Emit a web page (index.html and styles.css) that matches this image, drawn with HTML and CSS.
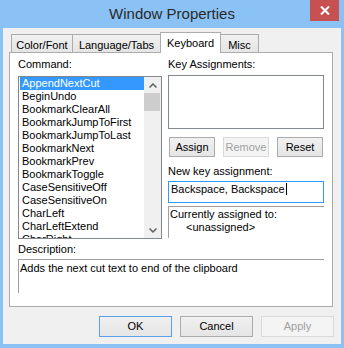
FILE: index.html
```html
<!DOCTYPE html>
<html>
<head>
  <title>Window Properties</title>
  <link rel="stylesheet" href="styles.css">
</head>
<body>
  <div class="window">
    <div class="titlebar">
      <span></span>
      <span class="title">Window Properties</span>
      <span class="close">
        <svg width="10" height="9" viewBox="0 0 10 9"><path d="M1 0.5 L9 8.5 M9 0.5 L1 8.5" stroke="#fff" stroke-width="2"/></svg>
      </span>
    </div>

    <div class="client">
      <div class="tabs">
        <div class="tab w-color">Color/Font</div>
        <div class="tab w-lang">Language/Tabs</div>
        <div class="tab w-key active">Keyboard</div>
        <div class="tab w-misc">Misc</div>
      </div>

      <div class="panel">
        <div class="cols">
          <div class="col-left">
            <div class="label">Command:</div>
            <div class="listbox">
              <div class="items">
                <div class="item selected">AppendNextCut</div>
                <div class="item">BeginUndo</div>
                <div class="item">BookmarkClearAll</div>
                <div class="item">BookmarkJumpToFirst</div>
                <div class="item">BookmarkJumpToLast</div>
                <div class="item">BookmarkNext</div>
                <div class="item">BookmarkPrev</div>
                <div class="item">BookmarkToggle</div>
                <div class="item">CaseSensitiveOff</div>
                <div class="item">CaseSensitiveOn</div>
                <div class="item">CharLeft</div>
                <div class="item">CharLeftExtend</div>
                <div class="item partial">CharRight</div>
              </div>
              <div class="scrollbar">
                <div class="arrow">
                  <svg width="8" height="5" viewBox="0 0 8 5"><path d="M0.5 4.5 L4 1 L7.5 4.5" fill="none" stroke="#606060" stroke-width="1.5"/></svg>
                </div>
                <div class="thumb"></div>
                <div class="track"></div>
                <div class="arrow">
                  <svg width="8" height="5" viewBox="0 0 8 5"><path d="M0.5 0.5 L4 4 L7.5 0.5" fill="none" stroke="#606060" stroke-width="1.5"/></svg>
                </div>
              </div>
            </div>
          </div>

          <div class="col-right">
            <div class="label">Key Assignments:</div>
            <div class="keybox"></div>
            <div class="btn-row">
              <div class="btn small">Assign</div>
              <div class="btn small disabled">Remove</div>
              <div class="btn small">Reset</div>
            </div>
            <div class="label new-key">New key assignment:</div>
            <div class="input">Backspace, Backspace<span class="caret"></span></div>
            <div class="group">
              <div>Currently assigned to:</div>
              <div class="indent">&lt;unassigned&gt;</div>
            </div>
          </div>
        </div>

        <div class="label desc-label">Description:</div>
        <div class="desc">Adds the next cut text to end of the clipboard</div>
      </div>

      <div class="footer">
        <div class="btn wide default">OK</div>
        <div class="btn wide">Cancel</div>
        <div class="btn wide disabled">Apply</div>
      </div>
    </div>
  </div>
</body>
</html>
```

FILE: styles.css
```css
body {
  margin: 0;
  font-family: "Liberation Sans", Arial, sans-serif;
  font-size: 11px;
  color: #000;
}

.window {
  width: 344px;
  height: 348px;
  box-sizing: border-box;
  padding: 0 3px 4px;
  background: #8ac2f5;
  display: flex;
  flex-direction: column;
}

/* title bar */
.titlebar {
  height: 28px;
  display: grid;
  grid-template-columns: 1fr auto 1fr;
}

.title {
  font-size: 15px;
  line-height: 28px;
  color: #2a2a2a;
}

.close {
  justify-self: end;
  align-self: start;
  width: 29px;
  height: 21px;
  margin-right: 2px;
  background: #c75050;
  display: flex;
  align-items: center;
  justify-content: center;
}

/* client area */
.client {
  flex: 1;
  background: #f0f0f0;
  padding: 4px 8px 0 6px;
}

.tabs {
  display: flex;
  align-items: flex-end;
  height: 20px;
  margin-left: 2px;
}

.tab {
  box-sizing: border-box;
  height: 18px;
  padding-top: 4px;
  line-height: 13px;
  text-align: center;
  border: 1px solid #acacac;
  border-bottom: none;
  background: linear-gradient(#f0f0f0, #e5e5e5);
  margin-left: -1px;
}

.tab:first-child { margin-left: 0; }

.tab.active {
  position: relative;
  z-index: 1;
  height: 21px;
  margin-bottom: -1px;
  padding-top: 4px;
  background: #fff;
}

.w-color { width: 62px; }
.w-lang { width: 89px; }
.w-key { width: 61px; }
.w-misc { width: 39px; }

.panel {
  box-sizing: border-box;
  height: 255px;
  border: 1px solid #acacac;
  background: #fff;
  padding: 5px 8px 0;
}

.label {
  line-height: 13px;
  white-space: nowrap;
}

.cols {
  display: flex;
  gap: 6px;
}

.col-left { width: 144px; }
.col-right { width: 156px; }

/* command list */
.listbox {
  box-sizing: border-box;
  margin-top: 5px;
  height: 163px;
  border: 1px solid #828790;
  display: flex;
}

.items {
  flex: 1;
  overflow: hidden;
}

.item {
  height: 13px;
  line-height: 13px;
  margin-left: 1px;
  padding-left: 2px;
  white-space: nowrap;
}

.item.partial {
  height: 5px;
  overflow: hidden;
}

.item.selected {
  background: #3399ff;
  color: #fff;
}

.scrollbar {
  width: 17px;
  background: #f0f0f0;
  display: flex;
  flex-direction: column;
}

.arrow {
  height: 16px;
  display: flex;
  align-items: center;
  justify-content: center;
}

.thumb {
  height: 18px;
  margin-right: 1px;
  background: #cdcdcd;
}

.track { flex: 1; }

/* key assignments */
.keybox {
  box-sizing: border-box;
  margin-top: 4px;
  height: 54px;
  border: 1px solid #828790;
}

.btn-row {
  display: flex;
  justify-content: space-between;
  margin-top: 8px;
  padding: 0 1px;
}

.btn {
  box-sizing: border-box;
  border: 1px solid #acacac;
  background: linear-gradient(#f0f0f0, #e5e5e5);
  text-align: center;
}

.btn.small {
  width: 46px;
  height: 20px;
  line-height: 18px;
}

.btn.disabled {
  border-color: #d9d9d9;
  background: #f4f4f4;
  color: #a0a0a0;
}

.btn.default { border-color: #5b9fe8; }

.new-key { margin-top: 8px; }

.input {
  box-sizing: border-box;
  margin-top: 3px;
  height: 22px;
  padding: 1px 2px;
  line-height: 13px;
  border: 1px solid #3399ff;
  white-space: nowrap;
}

.caret {
  display: inline-block;
  width: 1px;
  height: 12px;
  margin-left: 1px;
  background: #000;
  vertical-align: -2px;
}

.group {
  box-sizing: border-box;
  margin-top: 3px;
  height: 32px;
  padding: 1px 0 0 1px;
  line-height: 13px;
  border-top: 1px solid #a0a0a0;
  border-left: 1px solid #a0a0a0;
}

.indent { padding-left: 16px; }

/* description */
.desc-label { margin-top: 4px; }

.desc {
  box-sizing: border-box;
  margin-top: 3px;
  height: 34px;
  padding: 2px 0 0 1px;
  line-height: 13px;
  border-top: 1px solid #a0a0a0;
  border-left: 1px solid #a0a0a0;
}

/* dialog buttons */
.footer {
  display: flex;
  justify-content: flex-end;
  gap: 8px;
  margin-top: 9px;
  margin-right: -1px;
}

.btn.wide {
  width: 73px;
  height: 21px;
  line-height: 19px;
}
```
